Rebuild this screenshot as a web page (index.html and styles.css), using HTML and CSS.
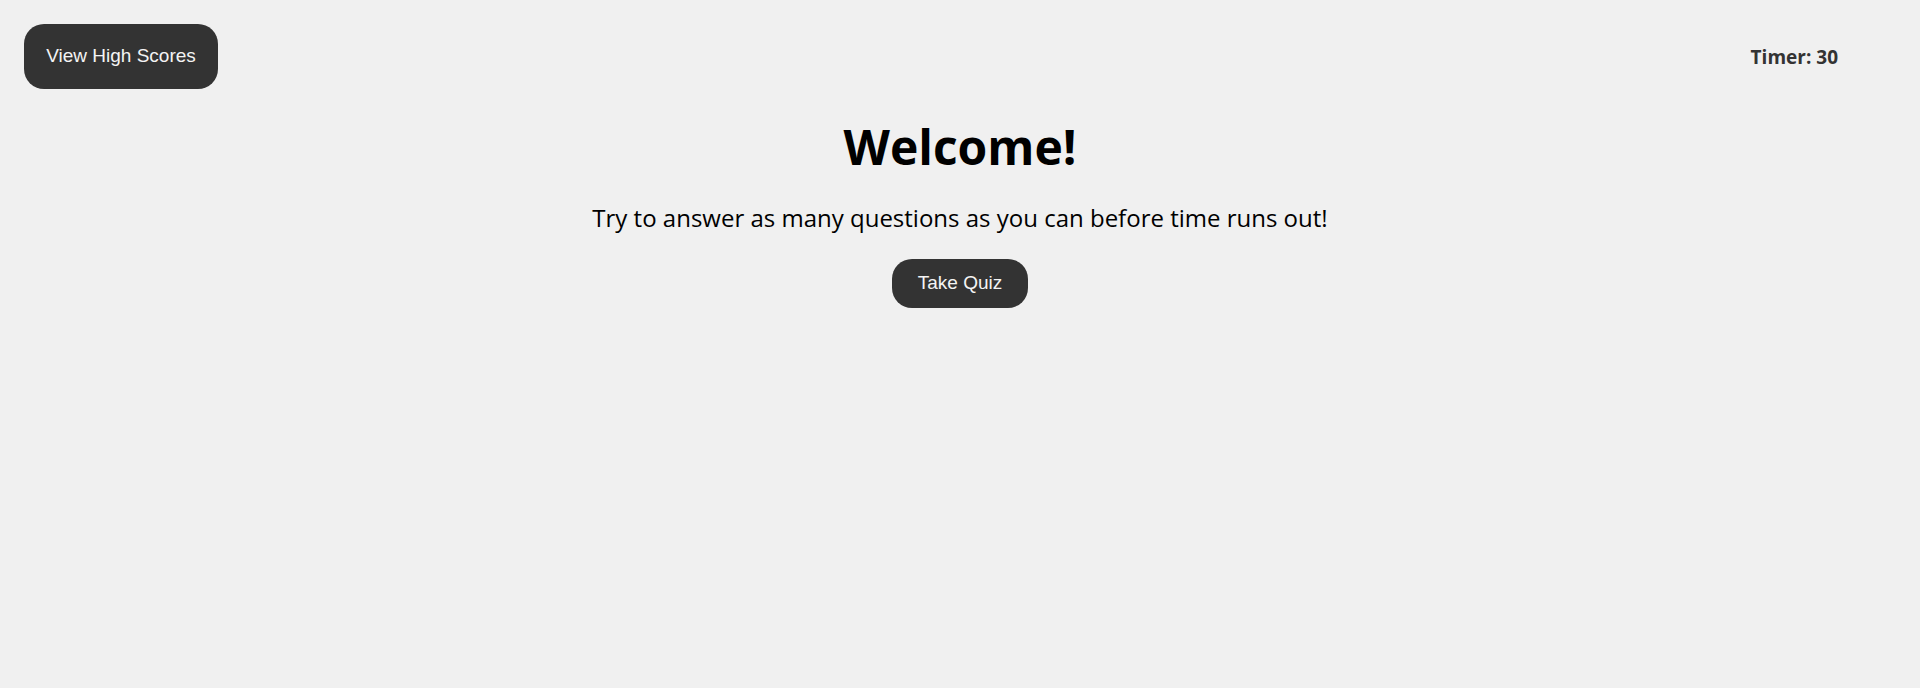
FILE: index.html
```html
<!DOCTYPE html>
<html lang="en">
<head>
<meta charset="utf-8">
<title>Code Quiz</title>
<link rel="stylesheet" href="styles.css">
</head>
<body>
<header class="top-bar">
  <button class="btn btn-scores">View High Scores</button>
  <div class="timer">Timer: <span>30</span></div>
</header>
<main class="intro">
  <h1 class="title">Welcome!</h1>
  <p class="lead">Try to answer as many questions as you can before time runs out!</p>
  <button class="btn btn-start">Take Quiz</button>
</main>
</body>
</html>
```
FILE: styles.css
```css
html, body {
  margin: 0;
  padding: 0;
  background: #f0f0f0;
}
body {
  font-family: "Open Sans", "Liberation Sans", sans-serif;
  color: #000;
  min-height: 688px;
}
.top-bar {
  display: flex;
  justify-content: space-between;
  align-items: center;
  padding: 24px 82px 0 24px;
}
.btn {
  font-family: "Liberation Sans", Arial, sans-serif;
  font-size: 19px;
  line-height: 22px;
  background: #333333;
  color: #f4f4f4;
  border: none;
  cursor: pointer;
}
.btn-scores {
  padding: 21px 22px 22px;
  border-radius: 20px;
  width: 194px;
}
.timer {
  font-weight: 700;
  font-size: 19px;
  color: #333;
}
.intro {
  display: flex;
  flex-direction: column;
  align-items: center;
  text-align: center;
}
.title {
  font-size: 48px;
  font-weight: 700;
  line-height: 1.2;
  margin: 0;
  margin-top: 29px;
}
.lead {
  font-size: 24px;
  line-height: 1.4;
  margin: 25px 0 25px;
}
.btn-start {
  padding: 13px 25px 14px;
  border-radius: 20px;
  width: 136px;
}
```
